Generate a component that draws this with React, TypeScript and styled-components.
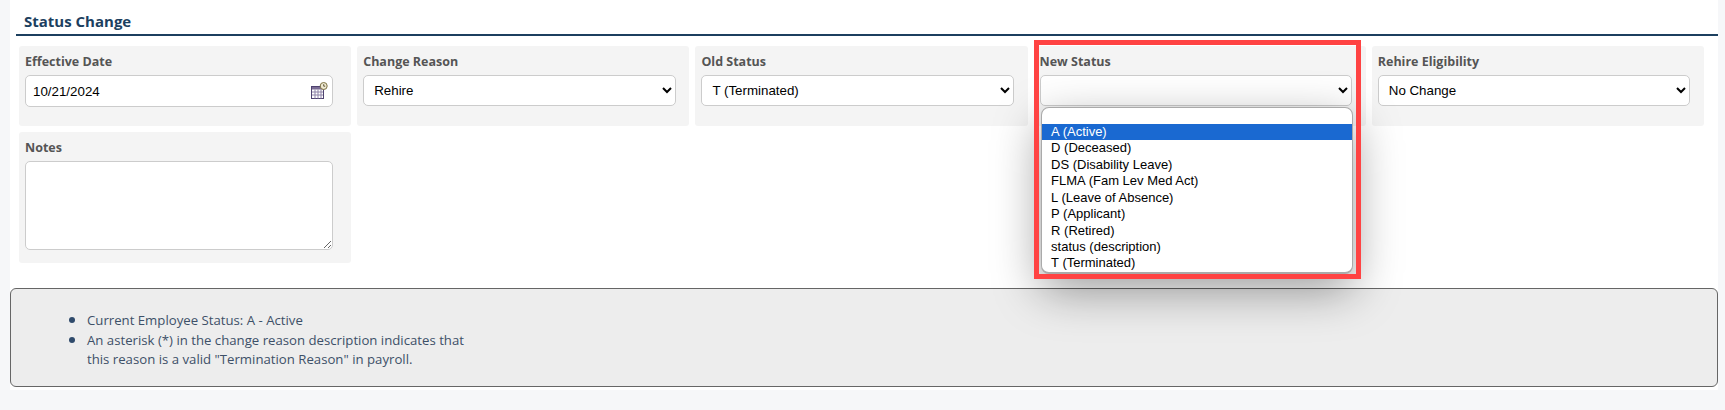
import styled, { createGlobalStyle } from "styled-components";

const GlobalStyle = createGlobalStyle`
  html, body {
    margin: 0;
    padding: 0;
    background: #f6f7f9;
  }
  body {
    font-family: "Open Sans", "Liberation Sans", sans-serif;
    overflow: hidden;
  }
`;

const CalendarIcon = () => (
  <svg width="17" height="17" viewBox="0 0 17 17">
    <rect x="0.5" y="4.5" width="12" height="12" fill="#fff" stroke="#4f4370" />
    <rect x="1" y="5" width="11" height="2.5" fill="#7a6c94" />
    <path d="M1 10h11M1 13h11M4 7.5v9M7 7.5v9M10 7.5v9" stroke="#8f84a8" strokeWidth="1" fill="none" />
    <circle cx="12.7" cy="4" r="3.5" fill="#efe9d2" stroke="#7d7244" />
    <path d="M12.7 2.2v2h1.5" stroke="#3d3518" strokeWidth="0.8" fill="none" />
  </svg>
);

const statuses = [
  "",
  "A (Active)",
  "D (Deceased)",
  "DS (Disability Leave)",
  "FLMA (Fam Lev Med Act)",
  "L (Leave of Absence)",
  "P (Applicant)",
  "R (Retired)",
  "status (description)",
  "T (Terminated)",
];

export default function App() {
  return (
    <>
      <GlobalStyle />
      <Page>
        <Sheet>
          <Section>
            <SectionTitle>Status Change</SectionTitle>
            <FieldGrid>
              <FieldCard>
                <FieldLabel>Effective Date</FieldLabel>
                <DateBox>
                  <DateValue>10/21/2024</DateValue>
                  <CalendarIcon />
                </DateBox>
              </FieldCard>
              <FieldCard>
                <FieldLabel>Change Reason</FieldLabel>
                <Select defaultValue="Rehire">
                  <option>Rehire</option>
                </Select>
              </FieldCard>
              <FieldCard>
                <FieldLabel>Old Status</FieldLabel>
                <Select defaultValue="T (Terminated)">
                  <option>T (Terminated)</option>
                </Select>
              </FieldCard>
              <FieldCard>
                <FieldLabel>New Status</FieldLabel>
                <Select defaultValue="">
                  <option value=""></option>
                </Select>
                <OptionList>
                  {statuses.map((s, i) => (
                    <OptionRow key={i} $active={s === "A (Active)"}>
                      {s}
                    </OptionRow>
                  ))}
                </OptionList>
                <Highlight />
              </FieldCard>
              <FieldCard>
                <FieldLabel>Rehire Eligibility</FieldLabel>
                <Select defaultValue="No Change">
                  <option>No Change</option>
                </Select>
              </FieldCard>
              <FieldCard>
                <FieldLabel>Notes</FieldLabel>
                <NotesArea />
              </FieldCard>
            </FieldGrid>
          </Section>
          <InfoPanel>
            <InfoList>
              <li>Current Employee Status: A - Active</li>
              <li>
                An asterisk (*) in the change reason description indicates that
                this reason is a valid "Termination Reason" in payroll.
              </li>
            </InfoList>
          </InfoPanel>
        </Sheet>
      </Page>
    </>
  );
}

const Page = styled.div`
  width: 1725px;
  height: 410px;
  padding: 0 7px 20px 10px;
  box-sizing: border-box;
`;

const Sheet = styled.div`
  background: #fff;
  height: 390px;
  padding-top: 13px;
  box-sizing: border-box;
`;

const Section = styled.section`
  padding: 0 0 0 6px;
`;

const SectionTitle = styled.h2`
  margin: 0;
  height: 21px;
  padding-left: 8px;
  font-size: 15px;
  line-height: 16px;
  font-weight: 700;
  color: #1c3f5f;
  border-bottom: 2px solid #1c3f5f;
`;

const FieldGrid = styled.div`
  display: grid;
  grid-template-columns: repeat(5, 332.2px);
  grid-auto-rows: minmax(80px, auto);
  gap: 6px;
  margin: 10px 0 0 3px;
`;

const FieldCard = styled.div`
  position: relative;
  background: #f4f4f4;
  border-radius: 3px;
  padding: 6px 6px 13px;
  box-sizing: border-box;
`;

const FieldLabel = styled.div`
  height: 23px;
  font-size: 12.5px;
  line-height: 19px;
  font-weight: 700;
  color: #555;
`;

const DateBox = styled.div`
  display: flex;
  align-items: center;
  justify-content: space-between;
  width: 96.2%;
  height: 32px;
  padding: 0 4px 2px 7px;
  box-sizing: border-box;
  background: #fff;
  border: 1px solid #ccc;
  border-radius: 5px;
`;

const DateValue = styled.span`
  font-family: "Liberation Sans", Arial, sans-serif;
  font-size: 13.33px;
  color: #000;
  margin-top: 2px;
`;

const Select = styled.select`
  display: block;
  width: 97.6%;
  height: 31px;
  padding: 0 6px;
  box-sizing: border-box;
  background: #fff;
  border: 1px solid #ccc;
  border-radius: 5px;
  font-family: "Liberation Sans", Arial, sans-serif;
  font-size: 13.33px;
  color: #000;
`;

const NotesArea = styled.textarea`
  display: block;
  width: 96.2%;
  height: 89px;
  padding: 4px 7px;
  box-sizing: border-box;
  background: #fff;
  border: 1px solid #ccc;
  border-radius: 5px;
`;

const OptionList = styled.div`
  position: absolute;
  z-index: 2;
  top: 60.5px;
  left: 7px;
  width: 312.5px;
  height: 167px;
  box-sizing: border-box;
  background: #fff;
  border: 1px solid #aaa;
  border-bottom-width: 2px;
  border-radius: 8px;
  overflow: hidden;
  box-shadow: 0 16px 48px rgba(0, 0, 0, 0.4);
`;

const OptionRow = styled.div<{ $active?: boolean }>`
  height: 16.45px;
  line-height: 16.45px;
  padding-left: 9.5px;
  font-family: "Liberation Sans", Arial, sans-serif;
  font-size: 13px;
  white-space: nowrap;
  color: ${(p) => (p.$active ? "#fff" : "#000")};
  background: ${(p) => (p.$active ? "#1a69d1" : "transparent")};
`;

const Highlight = styled.div`
  position: absolute;
  z-index: 3;
  top: -6px;
  left: 0;
  width: 327px;
  height: 239px;
  box-sizing: border-box;
  border: 5px solid #ff4343;
  pointer-events: none;
`;

const InfoPanel = styled.div`
  margin-top: 25px;
  height: 99px;
  box-sizing: border-box;
  background: #ededed;
  border: 1px solid #666;
  border-radius: 6px;
  padding: 21px 0 0 76px;
`;

const InfoList = styled.ul`
  margin: 0;
  padding: 0;
  width: 392px;
  list-style: disc;
  font-size: 13.2px;
  line-height: 19px;
  color: #3d5068;

  li::marker {
    color: #2f4a6b;
    font-size: 16px;
  }
`;
